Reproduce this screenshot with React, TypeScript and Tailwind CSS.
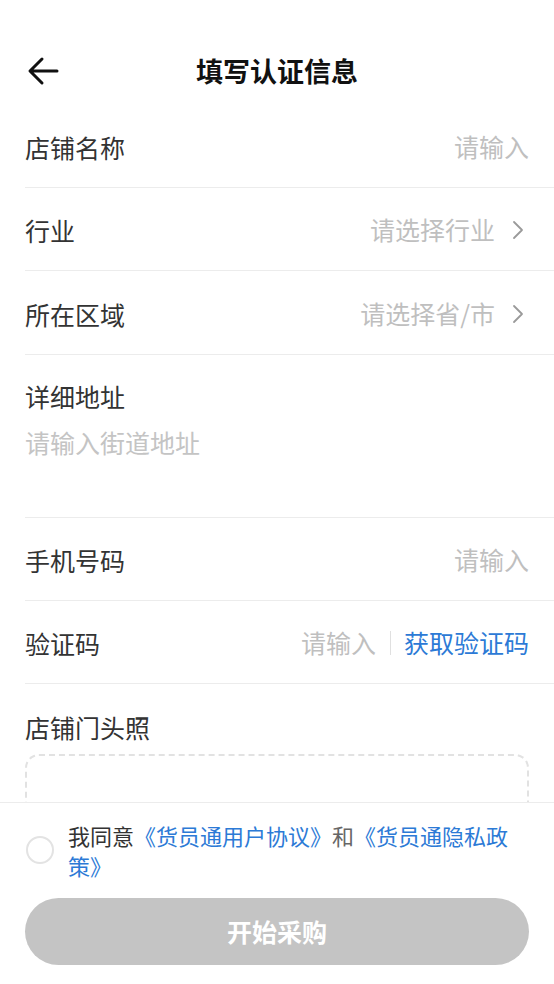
import React from "react";

const Chevron = () => (
  <svg width="12" height="20" viewBox="0 0 12 20" className="ml-[17px] mr-[5px]" fill="none">
    <path d="M2 2 L10 10 L2 18" stroke="#9a9a9a" strokeWidth="1.8" strokeLinecap="round" strokeLinejoin="round" />
  </svg>
);

const Row = ({ label, h, children }: { label: string; h: string; children?: React.ReactNode }) => (
  <div className={`ml-[25px] ${h} border-b border-[#ececec] flex items-center justify-between pr-[25px] pt-[2px]`}>
    <span className="text-[25px] text-[#333333] leading-[32px]">{label}</span>
    <div className="flex items-center">{children}</div>
  </div>
);

export default function App() {
  return (
    <div
      className="relative w-[554px] h-[984px] bg-white overflow-hidden"
      style={{ fontFamily: '"Noto Sans CJK SC", "Noto Sans", sans-serif' }}
    >
      <div className="h-[105px] pt-[40px]">
        <div className="relative h-[62px] flex items-center justify-center">
          <svg className="absolute left-[27px] top-[16px]" width="32" height="30" viewBox="0 0 32 30" fill="none">
            <path d="M30 15 H4 M15 3 L3 15 L15 27" stroke="#111" strokeWidth="3" strokeLinecap="round" strokeLinejoin="round" />
          </svg>
          <span className="text-[27px] font-bold text-[#111] leading-[36px]">填写认证信息</span>
        </div>
      </div>

      <Row label="店铺名称" h="h-[83px]">
        <span className="text-[25px] text-[#bfbfbf]">请输入</span>
      </Row>
      <Row label="行业" h="h-[83px]">
        <span className="text-[25px] text-[#bfbfbf]">请选择行业</span>
        <Chevron />
      </Row>
      <Row label="所在区域" h="h-[84px]">
        <span className="text-[25px] text-[#bfbfbf]">请选择省/市</span>
        <Chevron />
      </Row>
      <div className="ml-[25px] h-[163px] border-b border-[#ececec] pt-[25px]">
        <div className="text-[25px] text-[#333333] leading-[32px]">详细地址</div>
        <div className="mt-[14px] text-[25px] text-[#c4c4c4] leading-[32px]">请输入街道地址</div>
      </div>
      <Row label="手机号码" h="h-[83px]">
        <span className="text-[25px] text-[#bfbfbf]">请输入</span>
      </Row>
      <Row label="验证码" h="h-[83px]">
        <span className="text-[25px] text-[#bfbfbf]">请输入</span>
        <span className="ml-[14px] mr-[13px] w-[1px] h-[24px] bg-[#e0e0e0]" />
        <span className="text-[25px] text-[#2c7ad6]">获取验证码</span>
      </Row>
      <div className="px-[25px] pt-[27px]">
        <div className="text-[25px] text-[#333333] leading-[32px]">店铺门头照</div>
        <div className="mt-[11px] h-[170px] rounded-[14px] border-2 border-dashed border-[#e2e2e2]" />
      </div>

      <div className="absolute left-0 right-0 bottom-0 h-[182px] bg-white border-t border-[#ececec]">
        <div className="flex items-center pl-[26px] pt-[17px]">
          <div className="w-[28px] h-[28px] rounded-full border-2 border-[#e3e3e3] shrink-0" />
          <div className="ml-[14px] w-[452px] text-[22px] leading-[30px] text-[#333333]">
            我同意<span className="text-[#2c7ad6]">《货员通用户协议》</span><span className="text-[#666666]">和</span><span className="text-[#2c7ad6]">《货员通隐私政策》</span>
          </div>
        </div>
        <div className="px-[25px] mt-[18px]">
          <div className="h-[67px] rounded-full bg-[#c4c4c4] flex items-center justify-center">
            <span className="text-[25px] font-bold text-white">开始采购</span>
          </div>
        </div>
      </div>
    </div>
  );
}
